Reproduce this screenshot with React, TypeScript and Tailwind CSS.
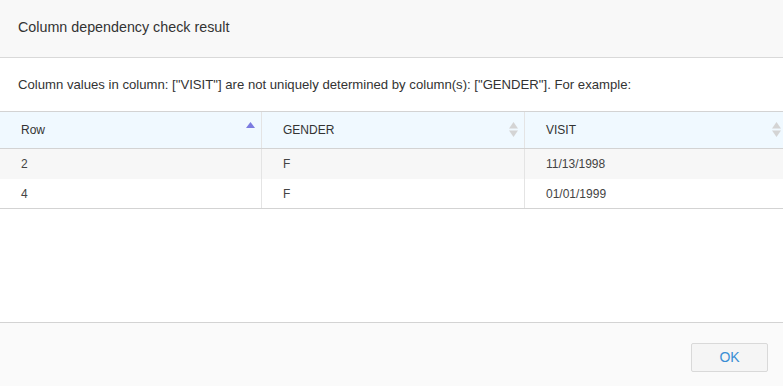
import React from 'react';

type Row = { row: string; gender: string; visit: string };

const ROWS: Row[] = [
  { row: '2', gender: 'F', visit: '11/13/1998' },
  { row: '4', gender: 'F', visit: '01/01/1999' },
];

function SortIcon({ active }: { active?: boolean }) {
  if (active) {
    return (
      <svg width="9" height="16" viewBox="0 0 9 16" className="absolute right-[6px] top-[8px]">
        <path d="M4.5 2 L9 8 L0 8 Z" fill="#7b7be0" />
      </svg>
    );
  }
  return (
    <svg width="9" height="16" viewBox="0 0 9 16" className="absolute right-[6px] top-[10px]">
      <path d="M4.5 0 L9 6.5 L0 6.5 Z" fill="#d4d4d4" />
      <path d="M4.5 15 L9 8.5 L0 8.5 Z" fill="#d4d4d4" />
    </svg>
  );
}

const COLS = [
  { key: 'row' as const, label: 'Row', w: 'w-[262px]', active: true },
  { key: 'gender' as const, label: 'GENDER', w: 'w-[263px]' },
  { key: 'visit' as const, label: 'VISIT', w: 'w-[262px]' },
];

export default function App() {
  return (
    <div
      className="flex h-[386px] w-[783px] flex-col overflow-hidden bg-white text-[#333]"
      style={{ fontFamily: '"Liberation Sans", Arial, sans-serif' }}
    >
      <div className="flex h-[58px] shrink-0 items-center border-b border-[#d9d9d9] bg-[#f8f8f8] px-[18px] pb-[2px] text-[14.3px]">
        Column dependency check result
      </div>

      <div className="flex-1 overflow-hidden">
        <p className="px-[18px] pt-[19px] text-[13.15px] leading-[16px]">
          Column values in column: [&quot;VISIT&quot;] are not uniquely determined by column(s): [&quot;GENDER&quot;]. For example:
        </p>

        <div className="mt-[18px] w-[787px] border-t border-[#d3d3d3] text-[12px]">
          <div className="flex h-[37px] border-b border-[#d3d3d3] bg-[#f0f9ff]">
            {COLS.map((c, i) => (
              <div
                key={c.key}
                className={`relative flex items-center pl-[21px] ${c.w} ${i < 2 ? 'border-r border-[#e4e4e4]' : ''}`}
              >
                {c.label}
                <SortIcon active={c.active} />
              </div>
            ))}
          </div>
          {ROWS.map((r, ri) => (
            <div
              key={r.row}
              className={`flex h-[30px] ${ri === 0 ? 'bg-[#f7f7f7]' : 'border-b border-[#d3d3d3] bg-white'}`}
            >
              {COLS.map((c, i) => (
                <div
                  key={c.key}
                  className={`flex items-center pl-[21px] text-[#444] ${c.w} ${i < 2 ? 'border-r border-[#e4e4e4]' : ''}`}
                >
                  {r[c.key]}
                </div>
              ))}
            </div>
          ))}
        </div>
      </div>

      <div className="flex h-[64px] shrink-0 items-start justify-end border-t border-[#d3d3d3] bg-[#fafafa] pr-[15px] pt-[20px]">
        <button className="h-[29px] w-[77px] rounded-[2px] border border-[#d9d9d9] bg-[#f5f5f5] text-[14px] text-[#3a8ed4]">
          OK
        </button>
      </div>
    </div>
  );
}
